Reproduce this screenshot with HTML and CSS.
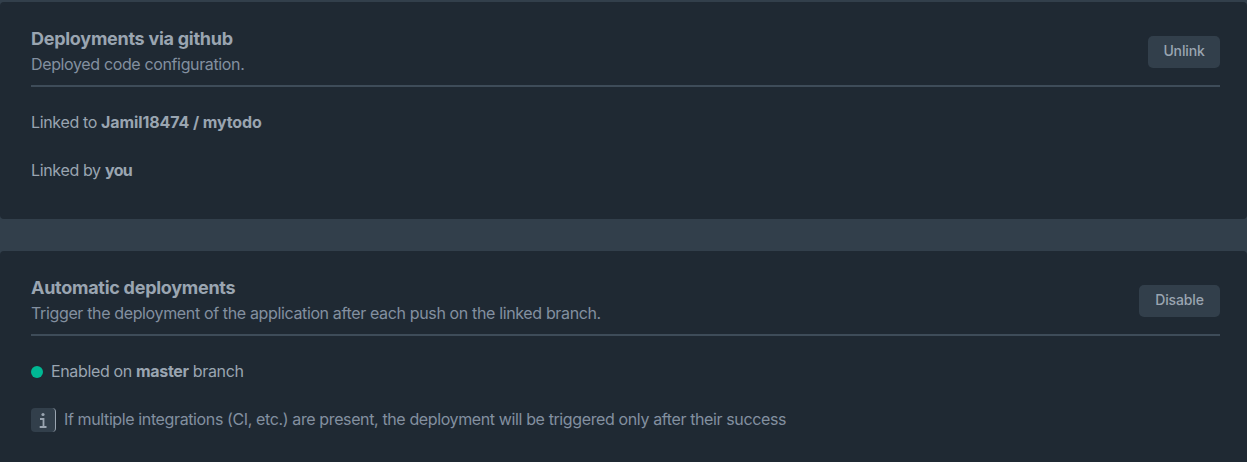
FILE: index.html
```
<!DOCTYPE html>
<html lang="en">
<head>
<meta charset="utf-8">
<title>Deployments</title>
<link rel="stylesheet" href="styles.css">
</head>
<body>
<main class="page">
  <section class="card">
    <header class="card-header">
      <div>
        <h2 class="title">Deployments via github</h2>
        <p class="subtitle">Deployed code configuration.</p>
      </div>
      <button class="button unlink">Unlink</button>
    </header>
    <p class="row">Linked to <strong class="repo">Jamil18474 / mytodo</strong></p>
    <p class="row">Linked by <strong class="owner">you</strong></p>
  </section>
  <section class="card">
    <header class="card-header">
      <div>
        <h2 class="title">Automatic deployments</h2>
        <p class="subtitle">Trigger the deployment of the application after each push on the linked branch.</p>
      </div>
      <button class="button disable">Disable</button>
    </header>
    <p class="row status"><span class="dot"></span><span>Enabled on <strong>master</strong> branch</span></p>
    <p class="row note">
      <span class="info">
        <svg width="24" height="24" viewBox="0 0 24 24" fill="none" stroke="currentColor" stroke-width="2">
          <circle cx="12" cy="6.5" r="1.6" fill="currentColor" stroke="none"/>
          <path d="M9 11h3.5v8.5M8.7 19h6.8" stroke-width="1.8"/>
        </svg>
      </span>
      <span class="note-text">If multiple integrations (CI, etc.) are present, the deployment will be triggered only after their success</span>
    </p>
  </section>
</main>
</body>
</html>
```
FILE: styles.css
```
* { box-sizing: border-box; }
body {
  margin: 0;
  background: #323f4b;
  color: #9aa5b1;
  font: 16px/24px Inter, Roboto, sans-serif;
  letter-spacing: -0.35px;
  overflow: hidden;
}
.page {
  height: 462px;
  padding-top: 2px;
  display: flex;
  flex-direction: column;
  gap: 32px;
  overflow: hidden;
}
.card {
  flex: none;
  height: 217px;
  padding: 24px 27px 0 31px;
  border-radius: 4px;
  background: #1f2933;
}
h2, p { margin: 0; }
.card-header {
  display: flex;
  justify-content: space-between;
  align-items: flex-start;
  height: 61px;
  border-bottom: 2px solid #3e4c59;
}
.title {
  font-size: 18px;
  line-height: 26px;
  font-weight: 700;
  letter-spacing: -0.27px;
}
.subtitle { color: #8390a0; letter-spacing: -0.36px; }
.button {
  height: 32px;
  margin-top: 10px;
  padding: 0 0 2px;
  border: 0;
  border-radius: 5px;
  background: #323f4b;
  color: #9aa5b1;
  font: 500 14px/20px Inter, Roboto, sans-serif;
  letter-spacing: -0.15px;
}
.unlink { width: 72px; }
.disable { width: 81px; }
.row { margin-top: 23px; padding-bottom: 1px; white-space: nowrap; }
strong { font-weight: 700; letter-spacing: -0.33px; }
.repo { letter-spacing: -0.11px; }
.owner { letter-spacing: -0.6px; }
.status, .note { display: flex; align-items: center; gap: 8px; }
.note { color: #8390a0; }
.note-text { letter-spacing: -0.38px; }
.dot { width: 12px; height: 12px; margin-top: 1px; border-radius: 50%; background: #00b894; }
.info {
  width: 25px;
  height: 24px;
  margin: 1px 0 -1px;
  border-right: 1px solid #9aa5b1;
  border-radius: 4px;
  background: #323f4b;
  color: #9aa5b1;
}
.info svg { display: block; }
```
